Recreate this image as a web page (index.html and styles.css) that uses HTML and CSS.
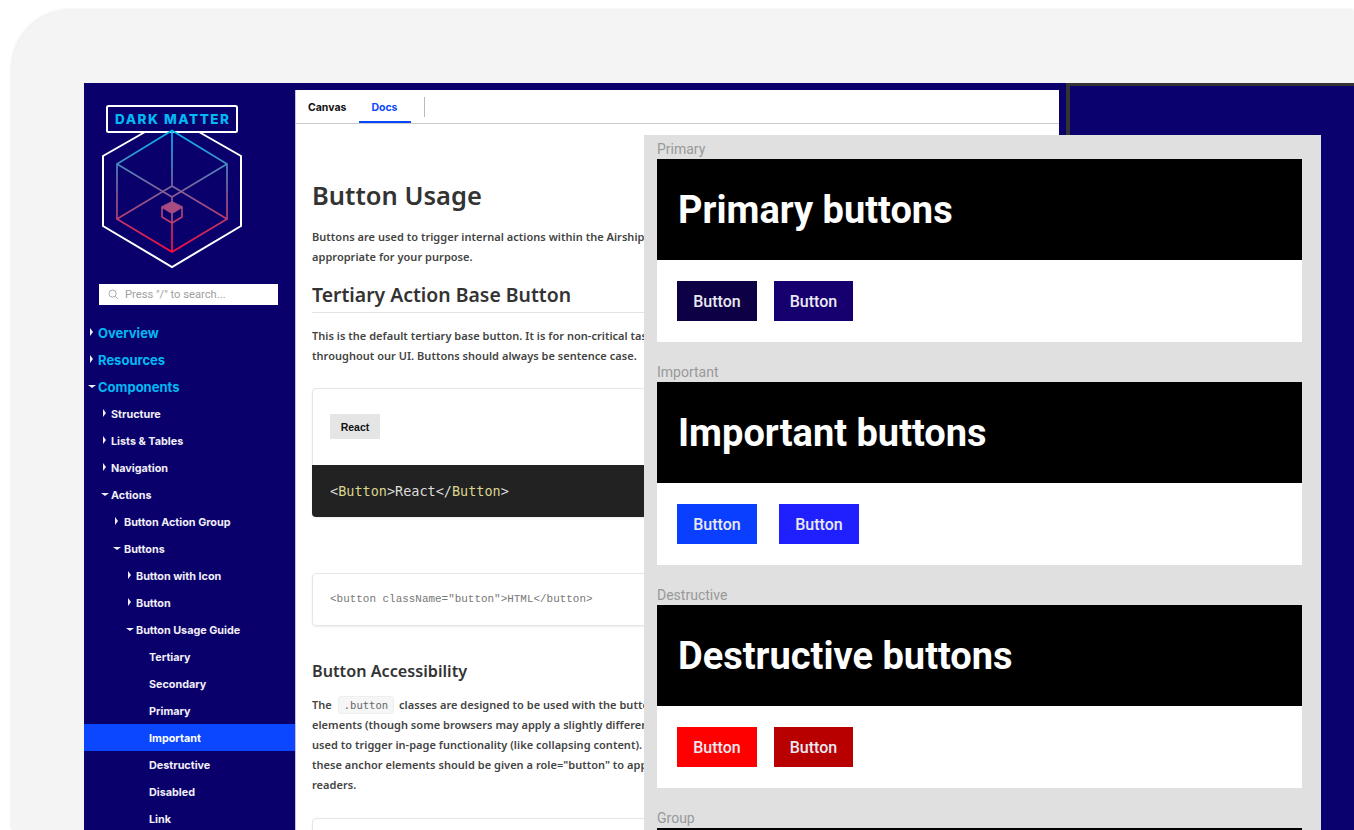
FILE: index.html
```html
<!DOCTYPE html>
<html>
<head>
  <meta charset="utf-8">
  <title>Button Usage</title>
  <link rel="stylesheet" href="styles.css">
</head>
<body>
<div class="device">
  <div class="screen">
    <div class="sidebar">
      <svg class="logo" viewBox="84 83 211 190" width="211" height="190">
        <defs>
          <linearGradient id="cubeGrad" gradientUnits="userSpaceOnUse" x1="0" y1="130" x2="0" y2="252">
            <stop offset="0" stop-color="#00b9f2"/>
            <stop offset="1" stop-color="#ff0a3c"/>
          </linearGradient>
        </defs>
        <rect x="107" y="106" width="130" height="26" rx="1.5" fill="none" stroke="#fff" stroke-width="2"/>
        <path d="M145 132 L103 156 L103 226 L172 267 L241 226 L241 156 L199 132" fill="none" stroke="#fff" stroke-width="2"/>
        <text class="logo-text" x="115" y="124" textLength="114" lengthAdjust="spacing">DARK MATTER</text>
        <g fill="none" stroke="url(#cubeGrad)" stroke-width="1.7">
          <path d="M172 130.5 L227 164 L227 219 L172 252 L117 219 L117 164 Z"/>
          <path d="M172 130.5 L172 186 M117 164 L172 197 L227 164 M117 219 L172 186 L227 219 M172 197 L172 202 M172 223 L172 252"/>
          <path d="M172 202 L182 207 L182 217 L172 223 L162 217 L162 207 Z"/>
        </g>
        <path d="M172 202 L182 207 L172 213 L162 207 Z" fill="#a84b80"/>
        <path d="M162 207 L172 213 L182 207 M172 213 L172 223" fill="none" stroke="#a84b80" stroke-width="1.7"/>
      </svg>
      <div class="search">
        <svg width="11" height="11" viewBox="0 0 11 11"><circle cx="4.6" cy="4.6" r="3.6" fill="none" stroke="#aaa"/><path d="M7.3 7.3 L10 10" stroke="#aaa"/></svg>
        <span>Press "/" to search...</span>
      </div>
      <ul class="nav">
        <li class="top closed">Overview</li>
        <li class="top closed">Resources</li>
        <li class="top open">Components</li>
        <li class="lv1 closed">Structure</li>
        <li class="lv1 closed">Lists &amp; Tables</li>
        <li class="lv1 closed">Navigation</li>
        <li class="lv1 open">Actions</li>
        <li class="lv2 closed">Button Action Group</li>
        <li class="lv2 open">Buttons</li>
        <li class="lv3 closed">Button with Icon</li>
        <li class="lv3 closed">Button</li>
        <li class="lv3 open">Button Usage Guide</li>
        <li class="lv4">Tertiary</li>
        <li class="lv4">Secondary</li>
        <li class="lv4">Primary</li>
        <li class="lv4 active">Important</li>
        <li class="lv4">Destructive</li>
        <li class="lv4">Disabled</li>
        <li class="lv4">Link</li>
      </ul>
    </div>

    <div class="main">
      <div class="tabs">
        <span class="tab">Canvas</span>
        <span class="tab tab-on">Docs</span>
        <span class="tab-sep"></span>
      </div>
      <div class="doc">
        <h1>Button Usage</h1>
        <p>Buttons are used to trigger internal actions within the Airship<br>appropriate for your purpose.</p>
        <h2>Tertiary Action Base Button</h2>
        <p class="after-h2">This is the default tertiary base button. It is for non-critical tasks<br>throughout our UI. Buttons should always be sentence case.</p>
        <div class="card">
          <div class="preview"><span class="react-btn">React</span></div>
          <div class="code-dark"><i>&lt;</i><b>Button</b><i>&gt;React&lt;/</i><b>Button</b><i>&gt;</i></div>
        </div>
        <div class="card card-plain">&lt;button className="button"&gt;HTML&lt;/button&gt;</div>
        <h3>Button Accessibility</h3>
        <p>The <code>.button</code> classes are designed to be used with the button<br>elements (though some browsers may apply a slightly different<br>used to trigger in-page functionality (like collapsing content).<br>these anchor elements should be given a role="button" to appear<br>readers.</p>
        <div class="card card-last"></div>
      </div>
    </div>

    <div class="gutter"></div>
    <div class="right"></div>

    <div class="sheet">
      <div class="group">
        <div class="label">Primary</div>
        <div class="banner">Primary buttons</div>
        <div class="samples">
          <span class="btn b-primary">Button</span>
          <span class="btn b-primary2">Button</span>
        </div>
      </div>
      <div class="group">
        <div class="label">Important</div>
        <div class="banner">Important buttons</div>
        <div class="samples wide">
          <span class="btn b-important">Button</span>
          <span class="btn b-important2">Button</span>
        </div>
      </div>
      <div class="group">
        <div class="label">Destructive</div>
        <div class="banner">Destructive buttons</div>
        <div class="samples">
          <span class="btn b-destructive">Button</span>
          <span class="btn b-destructive2">Button</span>
        </div>
      </div>
      <div class="group">
        <div class="label">Group</div>
        <div class="banner banner-cut"></div>
      </div>
    </div>
  </div>
</div>
</body>
</html>
```

FILE: styles.css
```css
html, body {
  margin: 0;
  height: 830px;
  overflow: hidden;
  background: #ffffff;
}

body {
  font-family: "Noto Sans", sans-serif;
}

.device {
  width: 1342px;
  height: 820px;
  margin: 10px 0 0 12px;
  padding: 73px 0 0 72px;
  box-sizing: border-box;
  background: #f4f4f4;
  border-radius: 60px 0 0 0;
  box-shadow: -1px -1px 3px rgba(0, 0, 0, 0.08);
}

.screen {
  position: relative;
  display: flex;
  height: 747px;
  background: #0a006b;
  overflow: hidden;
}

/* sidebar */
.sidebar {
  width: 211px;
  flex: none;
}

.logo {
  display: block;
}

.logo-text {
  font-family: "Inter", sans-serif;
  font-weight: 800;
  font-size: 13.5px;
  fill: #00b9f2;
}

.search {
  display: flex;
  align-items: center;
  gap: 6px;
  width: 179px;
  height: 21px;
  margin: 11px 0 14px 15px;
  padding-left: 9px;
  box-sizing: border-box;
  background: #ffffff;
  color: #a0a0a0;
  font-family: "Roboto", sans-serif;
  font-size: 11.2px;
}

.nav {
  list-style: none;
  margin: 0;
  padding: 0;
}

.nav li {
  position: relative;
  height: 27px;
  line-height: 29px;
  color: #f0eff8;
  font-family: "Inter", sans-serif;
  font-size: 10.8px;
  font-weight: 700;
  white-space: nowrap;
}

.nav .top { padding-left: 14px; color: #00b9f2; font-size: 13px; }
.nav .lv1 { padding-left: 27px; }
.nav .lv2 { padding-left: 40px; }
.nav .lv3 { padding-left: 52px; }
.nav .lv4 { padding-left: 65px; }

.nav .active {
  background: #0b47ff;
  color: #ffffff;
}

.closed::before, .open::before {
  content: "";
  position: absolute;
  border-style: solid;
  border-color: transparent;
}

.closed::before {
  top: 9px;
  border-width: 4px 0 4px 3.5px;
  border-left-color: #f0eff8;
}

.open::before {
  top: 12px;
  border-width: 3.5px 4px 0 4px;
  border-top-color: #f0eff8;
}

.top.closed::before { left: 6px; }
.top.open::before { left: 4px; }
.lv1.closed::before { left: 19px; }
.lv1.open::before { left: 17px; }
.lv2.closed::before { left: 31px; }
.lv2.open::before { left: 29px; }
.lv3.closed::before { left: 44px; }
.lv3.open::before { left: 42px; }

/* docs */
.main {
  width: 764px;
  flex: none;
  margin-top: 7px;
  box-sizing: border-box;
  background: #ffffff;
  border-left: 1px solid #c5c0e4;
  overflow: hidden;
}

.tabs {
  display: flex;
  align-items: center;
  height: 33px;
  padding-left: 12px;
  border-bottom: 1px solid #cccccc;
  box-sizing: content-box;
}

.tab {
  align-self: flex-start;
  font-family: "Inter", sans-serif;
  font-size: 10.5px;
  font-weight: 700;
  color: #111111;
  line-height: 36px;
}

.tab-on {
  width: 52px;
  height: 33px;
  margin-left: 13px;
  padding-left: 12px;
  box-sizing: border-box;
  color: #0b47ff;
  border-bottom: 2px solid #0b47ff;
}

.tab-sep {
  width: 1px;
  height: 20px;
  margin-left: 13px;
  background: #bbbbbb;
}

.doc {
  padding: 54px 0 0 16px;
  color: #333333;
  white-space: nowrap;
}

.doc h1 {
  margin: 0 0 15px;
  font-size: 25.5px;
  line-height: 34px;
  font-weight: 600;
}

.doc p {
  margin: 0;
  font-size: 11px;
  line-height: 20px;
  font-weight: 600;
  letter-spacing: 0.03px;
  color: #444444;
}

.doc h2 {
  width: 400px;
  margin: 14px 0 0;
  padding-bottom: 3px;
  font-size: 19.4px;
  line-height: 28px;
  font-weight: 600;
  border-bottom: 1px solid #e4e4e4;
}

.after-h2 {
  padding-top: 13px;
}

.card {
  width: 400px;
  margin-top: 22px;
  box-sizing: border-box;
  background: #ffffff;
  border: 1px solid #e6e6e6;
  border-radius: 4px;
  box-shadow: 0 1px 2px rgba(0, 0, 0, 0.08);
}

.preview {
  height: 76px;
  padding: 25px 0 0 17px;
  box-sizing: border-box;
}

.react-btn {
  display: block;
  width: 50px;
  height: 25px;
  line-height: 26px;
  text-align: center;
  background: #e5e5e5;
  color: #111111;
  font-family: "Liberation Sans", sans-serif;
  font-size: 10.5px;
  font-weight: 700;
}

.code-dark {
  height: 52px;
  margin: 0 -1px -1px;
  padding-left: 18px;
  line-height: 52px;
  background: #222222;
  color: #dddddd;
  font-family: "DejaVu Sans Mono", monospace;
  font-size: 13.5px;
  border-radius: 0 0 4px 4px;
}

.code-dark i { font-style: normal; }
.code-dark b { font-weight: 400; color: #d9d58f; }

.card-plain {
  height: 53px;
  margin-top: 56px;
  padding-left: 17px;
  line-height: 50px;
  color: #777777;
  font-family: "Liberation Mono", monospace;
  font-size: 10.95px;
}

.doc h3 {
  margin: 32px 0 11px;
  font-size: 16.2px;
  line-height: 26px;
  font-weight: 600;
}

.doc code {
  display: inline-block;
  margin: 0 2px 0 3px;
  padding: 0 5px;
  line-height: 16px;
  background: #f6f6f6;
  border: 1px solid #eeeeee;
  border-radius: 3px;
  color: #666666;
  font-family: "DejaVu Sans Mono", monospace;
  font-size: 10.5px;
  font-weight: 400;
}

.card-last {
  height: 60px;
  margin-top: 23px;
}

/* right pane */
.gutter {
  width: 7px;
  flex: none;
}

.right {
  flex: 1;
  border-left: 4px solid #333333;
  border-top: 3px solid #333333;
  background: #0a006e;
}

/* floating sheet of button samples */
.sheet {
  position: absolute;
  top: 52px;
  left: 560px;
  width: 677px;
  height: 695px;
  padding: 6px 19px 0 13px;
  box-sizing: border-box;
  background: #e0e0e0;
  overflow: hidden;
}

.group {
  margin-bottom: 22px;
}

.label {
  height: 18px;
  line-height: 16px;
  color: #999999;
  font-family: "Roboto", sans-serif;
  font-size: 14px;
}

.banner {
  height: 101px;
  padding-left: 21px;
  line-height: 102px;
  background: #000000;
  color: #ffffff;
  font-family: "Roboto", sans-serif;
  font-size: 38px;
  font-weight: 700;
}

.banner-cut {
  height: 2px;
}

.samples {
  display: flex;
  gap: 17px;
  height: 82px;
  padding: 21px 0 0 20px;
  box-sizing: border-box;
  background: #ffffff;
}

.samples.wide {
  gap: 22px;
}

.btn {
  width: 80px;
  height: 40px;
  line-height: 41px;
  text-align: center;
  color: #e9e9f2;
  font-family: "Roboto", sans-serif;
  font-size: 16px;
  font-weight: 500;
}

.b-primary { background: #0d0044; }
.b-primary2 { background: #16006f; width: 79px; }
.b-important { background: #0b3fff; }
.b-important2 { background: #2020ff; }
.b-destructive { background: #ff0000; }
.b-destructive2 { background: #b80000; width: 79px; }
```
